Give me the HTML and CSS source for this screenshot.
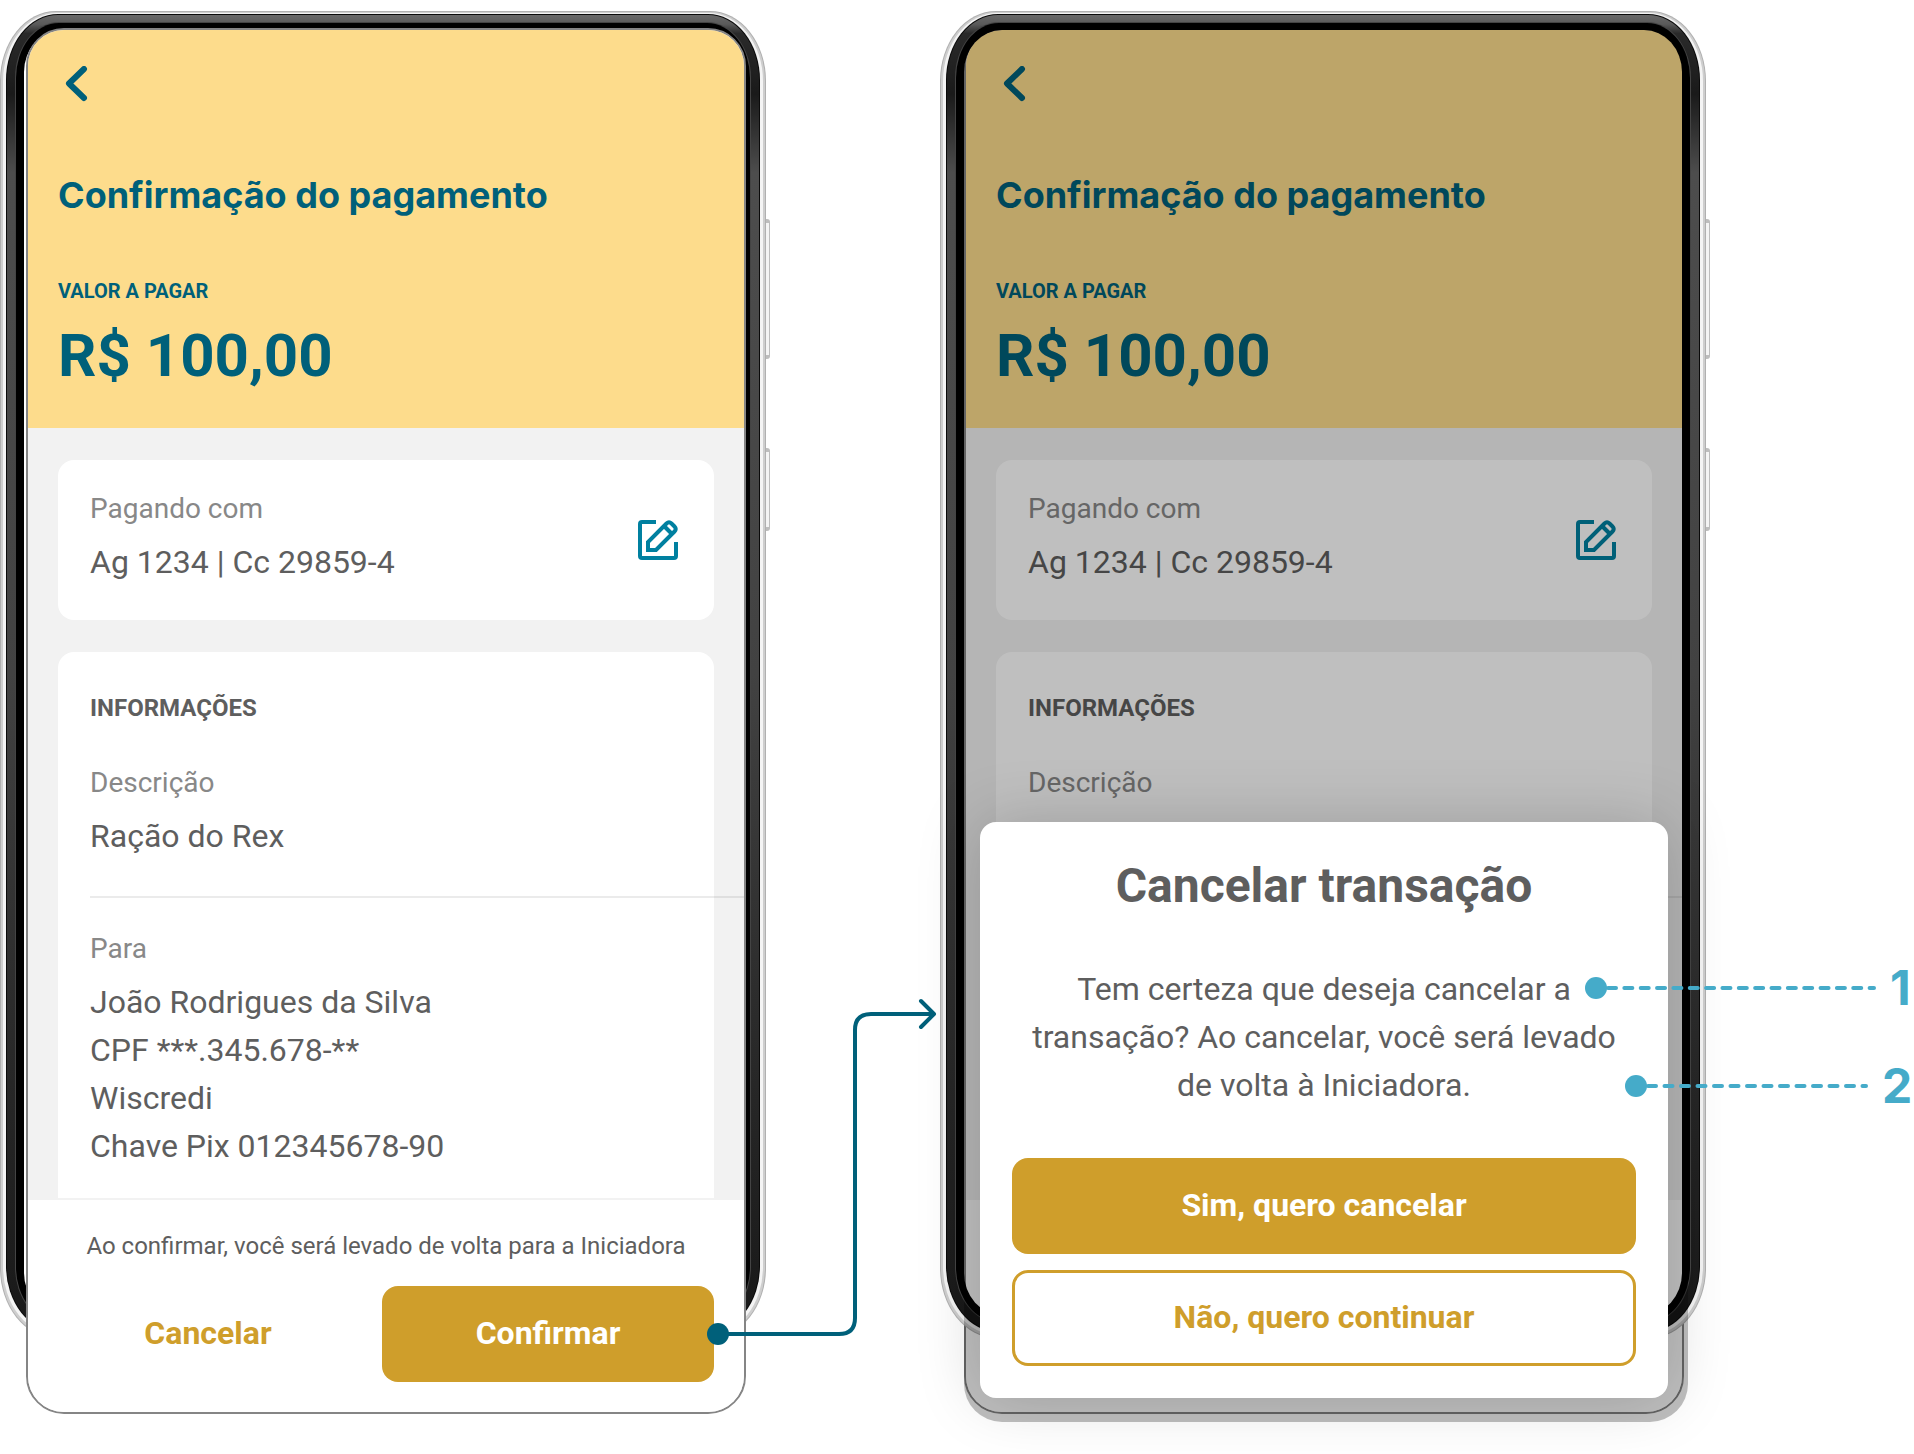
FILE: index.html
```html
<!DOCTYPE html>
<html lang="pt-BR">
<head>
<meta charset="utf-8">
<title>Confirmação do pagamento</title>
<link rel="stylesheet" href="styles.css">
</head>
<body>
<main class="flow">

  <section class="phone" aria-label="Tela de confirmação">
    <svg class="device" aria-hidden="true">
      <defs>
        <linearGradient id="bezel" x1="0" y1="0" x2="0" y2="1">
          <stop offset="0" stop-color="#686868"/>
          <stop offset=".007" stop-color="#5a5a5a"/>
          <stop offset=".014" stop-color="#2a2a2a"/>
          <stop offset=".06" stop-color="#1a1a1a"/>
          <stop offset=".12" stop-color="#4d4d4d"/>
          <stop offset=".5" stop-color="#424242"/>
          <stop offset=".75" stop-color="#2c2c2c"/>
          <stop offset="1" stop-color="#181818"/>
        </linearGradient>
        <mask id="opening">
          <rect width="100%" height="100%" fill="#fff"/>
          <rect class="ring-opening" fill="#000"/>
        </mask>
      </defs>
      <g mask="url(#opening)">
        <rect class="ring-edge"/>
        <rect class="ring-silver"/>
        <rect class="ring-shine"/>
        <rect class="ring-line"/>
        <rect class="ring-bezel" fill="url(#bezel)"/>
        <rect class="ring-lip"/>
        <rect class="ring-black"/>
      </g>
    </svg>
    <span class="side-key side-key-long"></span>
    <span class="side-key side-key-short"></span>
    <div class="screen">
      <header class="hero">
        <button class="back" type="button" aria-label="Voltar">
          <svg width="24" height="36" viewBox="0 0 24 36"><path d="M20 3 5 17.500 20 32" fill="none" stroke="currentColor" stroke-width="6" stroke-linecap="round" stroke-linejoin="round"/></svg>
        </button>
        <h1 class="title">Confirmação do pagamento</h1>
        <p class="overline">VALOR A PAGAR</p>
        <p class="amount">R$ 100,00</p>
      </header>
      <div class="content">
        <section class="card account">
          <div>
            <p class="label">Pagando com</p>
            <p class="value">Ag 1234 | Cc 29859-4</p>
          </div>
          <button class="edit" type="button" aria-label="Editar conta">
            <svg width="40" height="40" viewBox="0 0 40 40" fill="none" stroke="currentColor" stroke-width="4" stroke-linejoin="round"><path d="M18 2H4Q2 2 2 4V36Q2 38 4 38H36Q38 38 38 36V22"/><path stroke-linejoin="miter" d="M10 30V22L28.500 3.500Q31 1 33.500 3.500L36.500 6.500Q39 9 36.500 11.500L18 30Z"/><path d="M26 6 34 14"/></svg>
          </button>
        </section>
        <section class="card details">
          <h2 class="heading">INFORMAÇÕES</h2>
          <div>
            <p class="label">Descrição</p>
            <p class="value">Ração do Rex</p>
          </div>
          <hr class="rule">
          <div>
            <p class="label">Para</p>
            <p class="value">João Rodrigues da Silva<br>CPF ***.345.678-**<br>Wiscredi<br>Chave Pix 012345678-90</p>
          </div>
        </section>
      </div>
      <footer class="actions">
        <p class="note">Ao confirmar, você será levado de volta para a Iniciadora</p>
        <div class="buttons">
          <button class="button text-button" type="button">Cancelar</button>
          <button class="button solid-button" type="button">Confirmar</button>
        </div>
      </footer>
    </div>
    <svg class="connector" width="230" height="352" viewBox="0 0 230 352" fill="none" stroke="#00607a" stroke-width="4"><circle cx="11" cy="334" r="11" fill="#00607a" stroke="none"/><path d="M11 334H132Q148 334 148 318V30Q148 14 164 14H226"/><path d="M214 1 227 14 214 27" stroke-linecap="round" stroke-linejoin="round"/></svg>
  </section>

  <section class="phone phone-dimmed" aria-label="Tela de cancelamento">
    <span class="side-key side-key-long"></span>
    <span class="side-key side-key-short"></span>
    <div class="screen">
      <header class="hero">
        <button class="back" type="button" aria-label="Voltar">
          <svg width="24" height="36" viewBox="0 0 24 36"><path d="M20 3 5 17.500 20 32" fill="none" stroke="currentColor" stroke-width="6" stroke-linecap="round" stroke-linejoin="round"/></svg>
        </button>
        <h1 class="title">Confirmação do pagamento</h1>
        <p class="overline">VALOR A PAGAR</p>
        <p class="amount">R$ 100,00</p>
      </header>
      <div class="content">
        <section class="card account">
          <div>
            <p class="label">Pagando com</p>
            <p class="value">Ag 1234 | Cc 29859-4</p>
          </div>
          <button class="edit" type="button" aria-label="Editar conta">
            <svg width="40" height="40" viewBox="0 0 40 40" fill="none" stroke="currentColor" stroke-width="4" stroke-linejoin="round"><path d="M18 2H4Q2 2 2 4V36Q2 38 4 38H36Q38 38 38 36V22"/><path stroke-linejoin="miter" d="M10 30V22L28.500 3.500Q31 1 33.500 3.500L36.500 6.500Q39 9 36.500 11.500L18 30Z"/><path d="M26 6 34 14"/></svg>
          </button>
        </section>
        <section class="card details">
          <h2 class="heading">INFORMAÇÕES</h2>
          <div><p class="label">Descrição</p></div>
          <hr class="rule rule-behind">
        </section>
      </div>
      <div class="actions actions-empty"></div>
    </div>
    <svg class="device" aria-hidden="true">
      <g mask="url(#opening)">
        <rect class="ring-edge"/>
        <rect class="ring-silver"/>
        <rect class="ring-shine"/>
        <rect class="ring-line"/>
        <rect class="ring-bezel" fill="url(#bezel)"/>
        <rect class="ring-lip"/>
        <rect class="ring-black"/>
      </g>
    </svg>
    <div class="scrim"></div>
    <div class="dialog" role="dialog" aria-labelledby="dialog-title">
      <h2 class="dialog-title" id="dialog-title">Cancelar transação</h2>
      <p class="dialog-text">Tem certeza que deseja cancelar a transação? Ao cancelar, você será levado de volta à Iniciadora.</p>
      <div class="dialog-buttons">
        <button class="button solid-button" type="button">Sim, quero cancelar</button>
        <button class="button outline-button" type="button">Não, quero continuar</button>
      </div>
      <div class="callout callout-one">
        <svg width="291" height="22" viewBox="0 0 291 22"><circle cx="11" cy="11" r="11" fill="#45abc9"/><path d="M23 11H289" stroke="#45abc9" stroke-width="4" stroke-linecap="round" stroke-dasharray="8 8.350"/></svg>
        <span>1</span>
      </div>
      <div class="callout callout-two">
        <svg width="243" height="22" viewBox="0 0 243 22"><circle cx="11" cy="11" r="11" fill="#45abc9"/><path d="M23 11H241" stroke="#45abc9" stroke-width="4" stroke-linecap="round" stroke-dasharray="8 8.500"/></svg>
        <span>2</span>
      </div>
    </div>
  </section>

</main>
</body>
</html>
```
FILE: styles.css
```css
* {
  box-sizing: border-box;
}

body {
  margin: 0;
  background: #fff;
  color: #5e5e5e;
  font-family: Roboto, sans-serif;
}

h1, h2, p {
  margin: 0;
}

button {
  padding: 0;
  border: 0;
  background: none;
  font-family: inherit;
  cursor: pointer;
}

svg {
  display: block;
}

.flow {
  display: grid;
  grid-template-columns: 766fr 766fr;
  column-gap: 174px;
  padding: 11px 208px 40px 0;
  overflow: hidden;
}

/* Phone */

.phone {
  position: relative;
  display: flex;
  flex-direction: column;
  padding: 17px 20px 0 26px;
}

.phone-dimmed {
  padding: 17px 22px 0 24px;
}

/* The frame is a stack of rounded rings around a see-through opening */

.device {
  position: absolute;
  top: 0;
  left: 0;
  width: 100%;
  height: calc(100% - 76px);
  pointer-events: none;
}

.ring-edge {
  width: 100%;
  height: 100%;
  rx: 56px;
  ry: 70px;
  fill: #b0b0b0;
}

.ring-silver {
  x: 1px;
  y: 1px;
  width: calc(100% - 2px);
  height: calc(100% - 2px);
  rx: 55px;
  ry: 69px;
  fill: #cecece;
}

.ring-shine {
  x: 3px;
  y: 2px;
  width: calc(100% - 6px);
  height: calc(100% - 5px);
  rx: 54px;
  ry: 68px;
  fill: #f4f4f4;
}

.ring-line {
  x: 6px;
  y: 3px;
  width: calc(100% - 12px);
  height: calc(100% - 9px);
  rx: 52px;
  ry: 66px;
  fill: #0a0a0a;
}

.ring-bezel {
  x: 7px;
  y: 4px;
  width: calc(100% - 14px);
  height: calc(100% - 11px);
  rx: 51px;
  ry: 65px;
}

.ring-lip {
  x: 15px;
  y: 11px;
  width: calc(100% - 30px);
  height: calc(100% - 26px);
  rx: 44px;
  ry: 56px;
  fill: #444;
}

.ring-black {
  x: 16px;
  y: 12px;
  width: calc(100% - 32px);
  height: calc(100% - 28px);
  rx: 43px;
  ry: 55px;
  fill: #000;
}

.ring-opening {
  x: 24px;
  y: 19px;
  width: calc(100% - 48px);
  height: calc(100% - 42px);
  rx: 38px;
  ry: 42px;
}

.side-key {
  position: absolute;
  left: 100%;
  width: 4px;
  border: solid #bdbdbd;
  border-width: 4px 1px 4px 0;
  border-radius: 0 3px 3px 0;
  background: #f4f4f4;
}

.side-key-long {
  top: 208px;
  height: 140px;
}

.side-key-short {
  top: 437px;
  height: 83px;
}

.screen {
  position: relative;
  display: flex;
  flex: 1;
  flex-direction: column;
  border: 2px solid #858585;
  border-radius: 38px;
  background: #f2f2f2;
  overflow: hidden;
}

.hero {
  padding: 36px 30px 40px;
  background: #fddc8c;
  color: #00607a;
}

.back {
  display: block;
  margin-left: 6px;
  color: inherit;
}

.title {
  margin-top: 69px;
  font: 700 36px/48px Inter, sans-serif;
}

.overline {
  margin-top: 60px;
  font-size: 20px;
  font-weight: 700;
  line-height: 24px;
}

.amount {
  margin-top: 21px;
  font-size: 60px;
  font-weight: 700;
  line-height: 64px;
}

.content {
  display: flex;
  flex-direction: column;
  gap: 32px;
  padding: 32px 30px 0;
}

.card {
  padding: 32px;
  border-radius: 16px;
  background: #fff;
}

.account {
  display: flex;
  align-items: center;
  justify-content: space-between;
}

.edit {
  margin-right: 4px;
  color: #0080a0;
}

.label {
  color: #888;
  font-size: 28px;
  line-height: 34px;
}

.value {
  margin: 12px 0 2px;
  font-size: 32px;
  line-height: 48px;
}

.details {
  display: flex;
  flex-direction: column;
  gap: 34px;
  border-radius: 16px 16px 0 0;
  padding-bottom: 26px;
}

.heading {
  font-size: 24px;
  font-weight: 700;
  line-height: 48px;
}

.rule {
  width: calc(100% + 64px);
  height: 2px;
  margin: 0;
  border: 0;
  background: rgb(0 0 0 / 8%);
}

.actions {
  border-top: 2px solid #f2f2f2;
  padding: 30px;
  background: #fff;
}

.note {
  font-size: 24px;
  line-height: 32px;
  text-align: center;
}

.buttons {
  display: grid;
  grid-template-columns: 300fr 332fr;
  column-gap: 24px;
  margin-top: 24px;
}

.button {
  height: 96px;
  padding-bottom: 2px;
  border-radius: 16px;
  font-size: 32px;
  font-weight: 700;
}

.solid-button {
  background: #cf9e2b;
  color: #fff;
}

.text-button {
  color: #cf9e2b;
}

.outline-button {
  border: 3px solid #cf9e2b;
  background: #fff;
  color: #cf9e2b;
}

.connector {
  position: absolute;
  left: 707px;
  top: 989px;
  overflow: visible;
}

/* Dimmed phone with the dialog above it */

.phone-dimmed .content {
  flex: 1;
}

.phone-dimmed .details {
  flex: 1;
}

.rule-behind {
  margin-top: 62px;
}

.actions-empty {
  height: 214px;
}

.scrim {
  position: absolute;
  inset: 17px 18px -8px 24px;
  border-radius: 38px;
  background: rgb(0 0 0 / 25%);
}

.dialog {
  position: absolute;
  right: 38px;
  bottom: 16px;
  left: 40px;
  padding: 32px;
  border-radius: 16px;
  background: #fff;
  box-shadow: 0 0 64px rgb(0 0 0 / 18%);
  text-align: center;
}

.dialog-title {
  font-size: 48px;
  font-weight: 700;
  line-height: 64px;
}

.dialog-text {
  margin-top: 47px;
  font-size: 32px;
  line-height: 48px;
}

.dialog-buttons {
  display: grid;
  gap: 16px;
  margin-top: 49px;
}

.callout {
  position: absolute;
  display: flex;
  align-items: center;
  gap: 14px;
  color: #45abc9;
  font: 700 48px/58px Inter, sans-serif;
}

.callout-one {
  top: 137px;
  left: 605px;
}

.callout-two {
  top: 235px;
  left: 645px;
}
```
